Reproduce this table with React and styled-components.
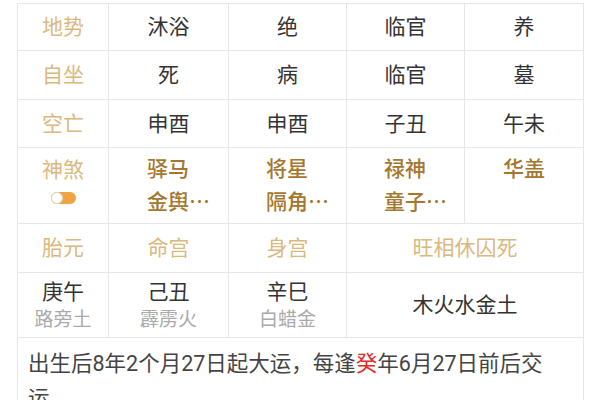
import React from 'react';
import styled, { createGlobalStyle } from 'styled-components';

const Global = createGlobalStyle`
  html, body { margin: 0; padding: 0; background: #ffffff; }
  body {
    font-family: Roboto, "Noto Sans CJK SC", "Noto Sans", sans-serif;
    color: #333333;
  }
`;

const Page = styled.div`
  padding: 3px 0 0 17px;
  width: 600px;
  height: 400px;
  box-sizing: border-box;
  overflow: hidden;
`;

const Table = styled.div`
  display: grid;
  grid-template-columns: 90px 119px 117px 117px 118px;
  grid-template-rows: 46px 48px 47px 75px 48px 64px auto;
  gap: 1px;
  padding: 1px;
  width: 567px;
  box-sizing: border-box;
  background: #e6e6e6;
`;

const Cell = styled.div`
  background: #ffffff;
  display: flex;
  flex-direction: column;
  align-items: center;
  justify-content: ${(p) => (p.$top ? 'flex-start' : 'center')};
  padding-top: ${(p) => (p.$top ? '8px' : '0')};
  grid-column: ${(p) => (p.$span ? `span ${p.$span}` : 'auto')};
  font-size: 21px;
  line-height: 28px;
  color: ${(p) => (p.$label ? '#dbb97e' : '#333333')};
`;

const Stars = styled.div`
  display: flex;
  flex-direction: column;
  align-items: flex-start;
  margin-top: -5px;
  padding-left: ${(p) => (p.$shift ? '20px' : '0')};
  font-family: "Noto Sans CJK SC", sans-serif;
  font-size: 21px;
  line-height: 33px;
  font-weight: 500;
  color: #a5772e;
`;

const Sub = styled.div`
  font-size: 19px;
  line-height: 27px;
  color: #aaaaaa;
`;

const Toggle = styled.span`
  position: relative;
  display: block;
  width: 25px;
  height: 12px;
  margin-top: 8px;
  border-radius: 6px;
  background: #f0a340;

  &::before {
    content: '';
    position: absolute;
    left: 0;
    top: 0;
    width: 12px;
    height: 12px;
    box-sizing: border-box;
    border-radius: 50%;
    background: #ffffff;
    border: 1px solid #e2d6c4;
  }
`;

const Note = styled.div`
  grid-column: span 5;
  background: #ffffff;
  padding: 8px 18px 20px 10px;
  font-size: 21.5px;
  line-height: 35px;
  color: #444444;
`;

const Red = styled.span`
  color: #e02a2a;
`;

const rows = [
  ['地势', '沐浴', '绝', '临官', '养'],
  ['自坐', '死', '病', '临官', '墓'],
  ['空亡', '申酉', '申酉', '子丑', '午未'],
];

const shensha = [
  ['驿马', '金舆…'],
  ['将星', '隔角…'],
  ['禄神', '童子…'],
  ['华盖'],
];

const pillars = [
  ['庚午', '路旁土'],
  ['己丑', '霹雳火'],
  ['辛巳', '白蜡金'],
];

export default function App() {
  return (
    <Page>
      <Global />
      <Table>
        {rows.map((r) =>
          r.map((t, i) => (
            <Cell key={r[0] + i} $label={i === 0}>
              {t}
            </Cell>
          ))
        )}

        <Cell $label $top>
          神煞
          <Toggle />
        </Cell>
        {shensha.map((s, i) => (
          <Cell key={'s' + i} $top>
            <Stars $shift={s.length > 1}>
              {s.map((x) => (
                <span key={x}>{x}</span>
              ))}
            </Stars>
          </Cell>
        ))}

        <Cell $label>胎元</Cell>
        <Cell $label>命宫</Cell>
        <Cell $label>身宫</Cell>
        <Cell $label $span={2}>旺相休囚死</Cell>

        {pillars.map(([gz, ny]) => (
          <Cell key={gz}>
            <div>{gz}</div>
            <Sub>{ny}</Sub>
          </Cell>
        ))}
        <Cell $span={2}>木火水金土</Cell>

        <Note>
          出生后8年2个月27日起大运，每逢<Red>癸</Red>年6月27日前后交运。
        </Note>
      </Table>
    </Page>
  );
}
